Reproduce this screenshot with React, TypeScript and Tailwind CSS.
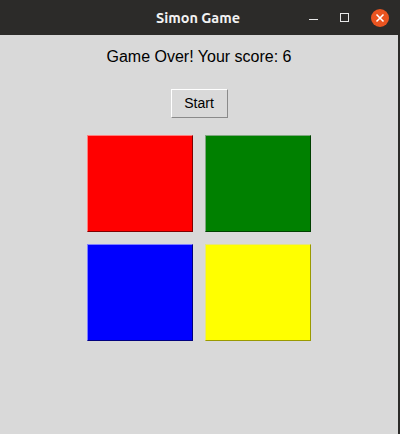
export default function App() {
  const pads = [
    { bg: "bg-[#ff0000]", edge: "border-t-[#ff7f7f] border-l-[#ff7f7f] border-b-[#7f0000] border-r-[#7f0000]" },
    { bg: "bg-[#008000]", edge: "border-t-[#7fa87f] border-l-[#7fa87f] border-b-[#004000] border-r-[#004000]" },
    { bg: "bg-[#0000ff]", edge: "border-t-[#7f7fff] border-l-[#7f7fff] border-b-[#00007f] border-r-[#00007f]" },
    { bg: "bg-[#ffff00]", edge: "border-t-[#e6e67f] border-l-[#e6e67f] border-b-[#9a9a00] border-r-[#9a9a00]" },
  ];

  return (
    <div className="flex h-[434px] w-[400px] flex-col overflow-hidden bg-[#2c2b29] font-['Liberation_Sans',Arial,sans-serif]">
      {/* title bar */}
      <div className="flex h-[35px] shrink-0 items-center bg-[#2c2b29] pr-[11px]">
        <div className="flex-1 pl-[87px] text-center font-['Ubuntu','DejaVu_Sans',sans-serif] text-[14.5px] font-bold text-[#f2f2f2]">
          Simon Game
        </div>
        <div className="flex items-center gap-[22px]">
          <div className="mt-[4px] h-[1px] w-[9px] bg-[#e8e8e8]" />
          <div className="h-[9px] w-[9px] border border-[#e8e8e8]" />
          <div className="flex h-[18px] w-[18px] items-center justify-center rounded-full bg-[#e95420]">
            <svg width="10" height="10" viewBox="0 0 10 10" className="stroke-white" strokeWidth="1.6">
              <path d="M1.5 1.5 L8.5 8.5 M8.5 1.5 L1.5 8.5" />
            </svg>
          </div>
        </div>
      </div>

      {/* client area */}
      <div className="mr-[2px] flex flex-1 flex-col items-center bg-[#d9d9d9]">
        <div className="mt-[12px] text-[16px] leading-[19px] text-black">Game Over! Your score: 6</div>
        <button
          type="button"
          className="mt-[23px] h-[29px] w-[57px] border border-t-white border-l-white border-b-[#8a8a8a] border-r-[#8a8a8a] bg-[#d9d9d9] text-[14px] text-black"
        >
          Start
        </button>
        <div className="mt-[17px] grid grid-cols-[106px_106px] gap-[12px]">
          {pads.map((p, i) => (
            <div key={i} className={`h-[97px] w-[106px] border ${p.bg} ${p.edge}`} />
          ))}
        </div>
      </div>
    </div>
  );
}
